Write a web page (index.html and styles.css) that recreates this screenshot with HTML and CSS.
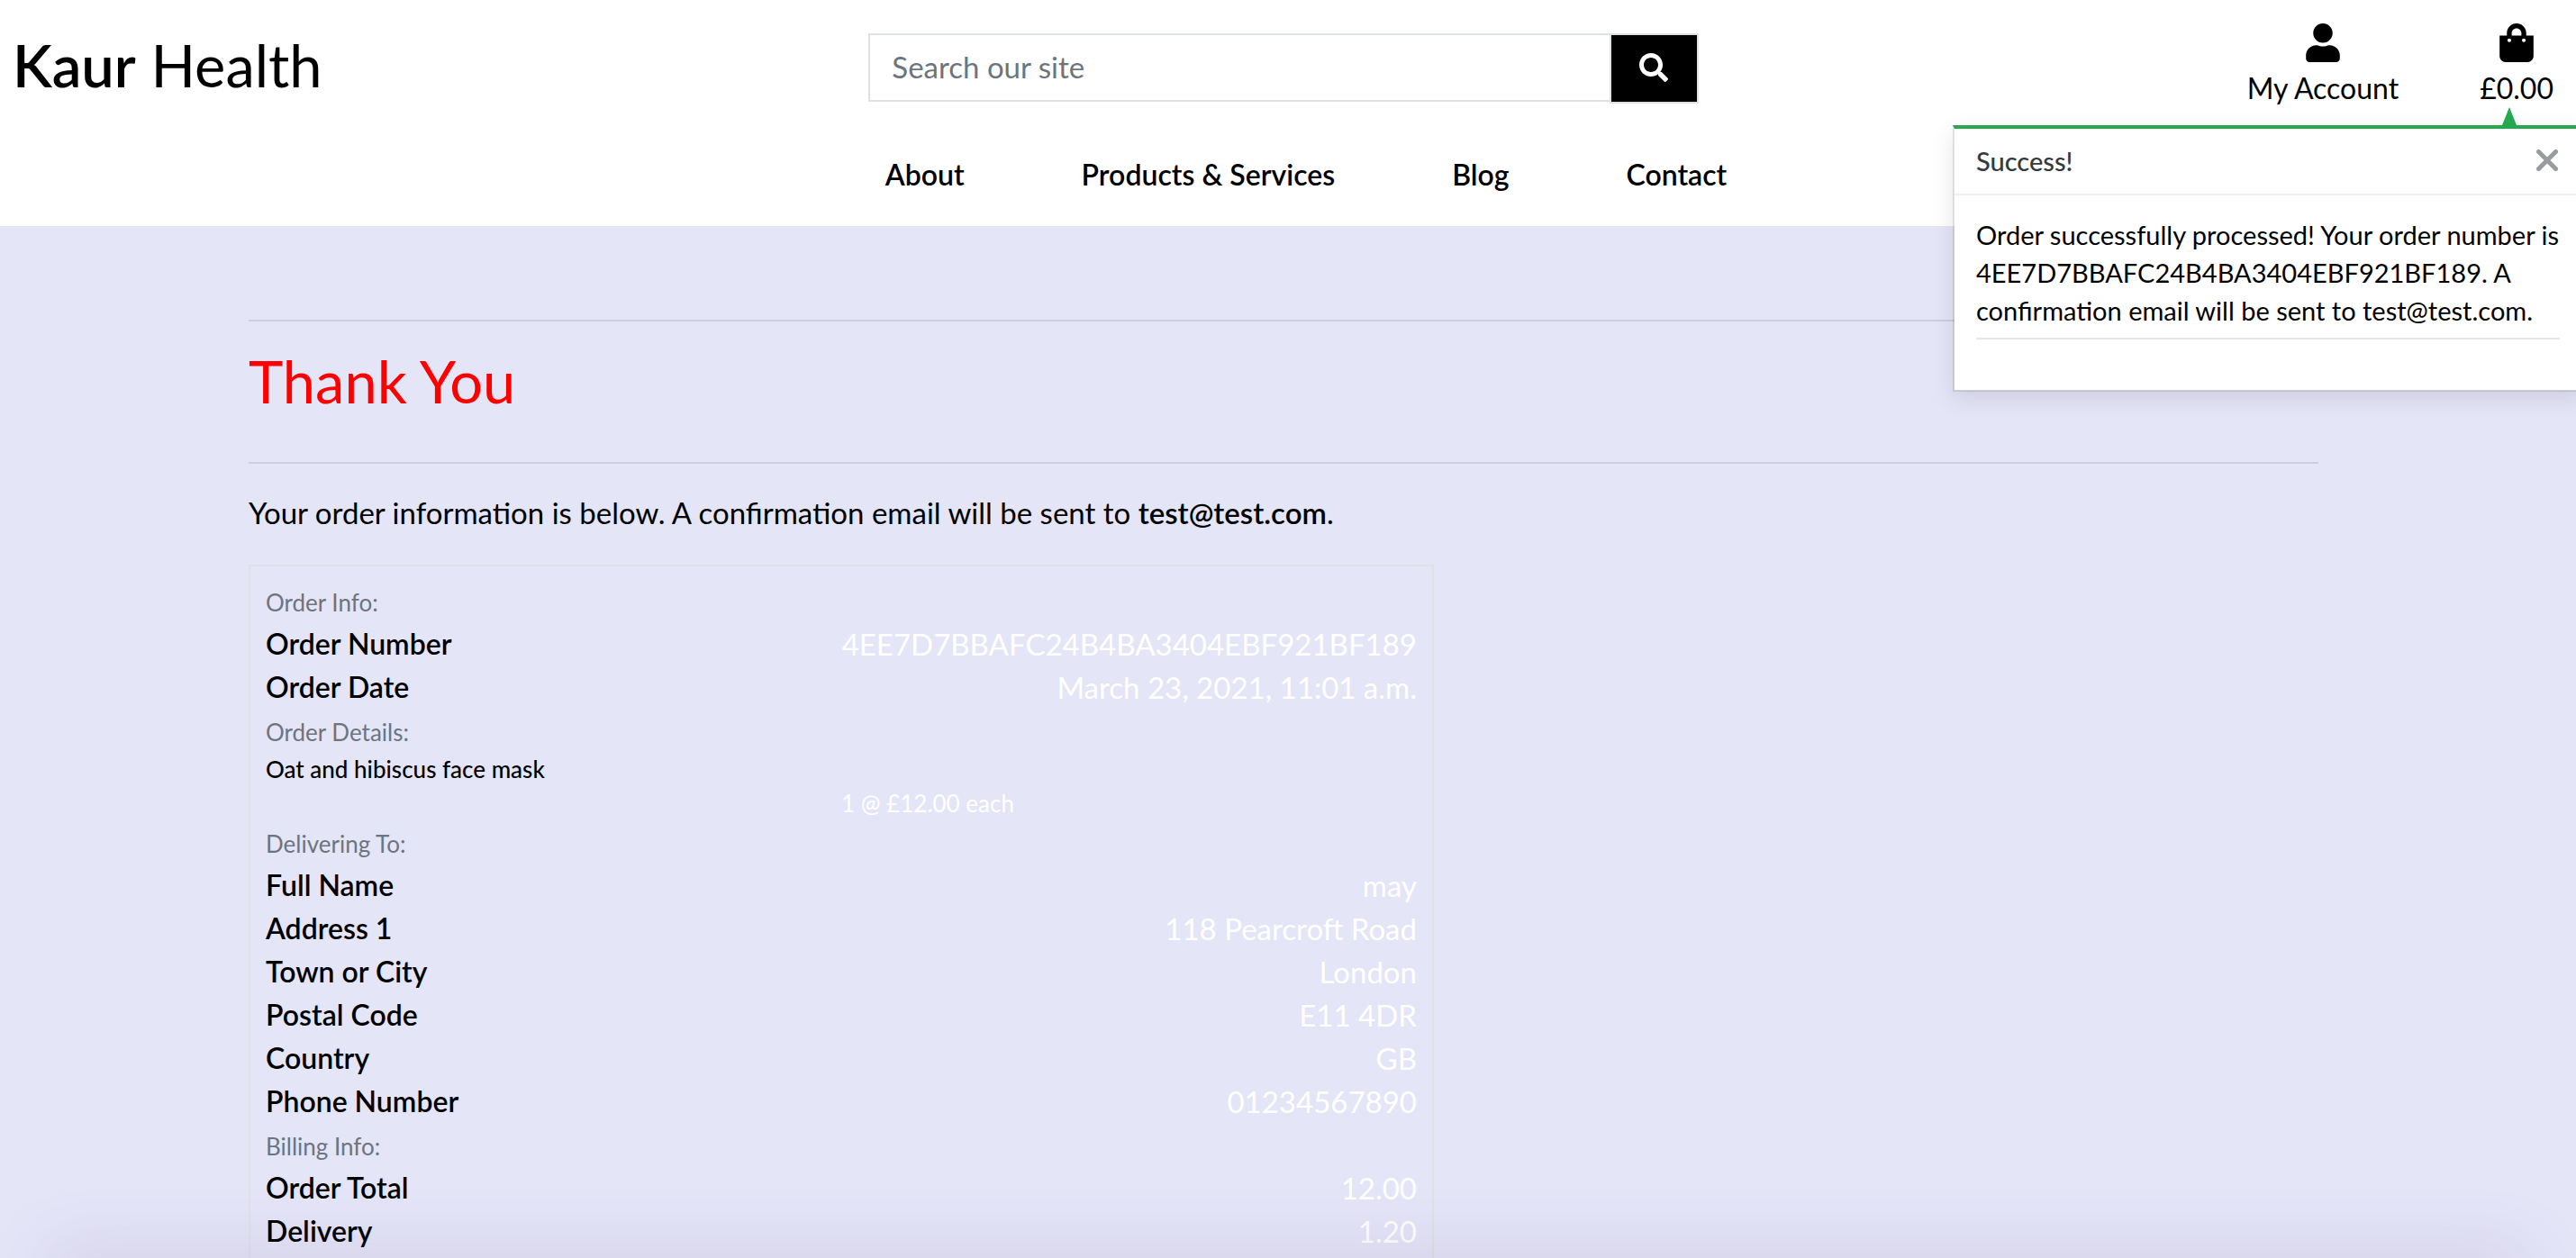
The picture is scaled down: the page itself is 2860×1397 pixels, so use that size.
FILE: index.html
```html
<!DOCTYPE html>
<html lang="en">
<head>
<meta charset="utf-8">
<meta name="viewport" content="width=device-width, initial-scale=1">
<title>Kaur Health</title>
<link rel="stylesheet" href="styles.css">
</head>
<body>
<header class="site-header">
  <div class="top-row">
    <a class="logo" href="#"><span class="strong">Kaur</span> Health</a>
    <form class="search" role="search">
      <input class="search-input" type="text" placeholder="Search our site" aria-label="Search our site">
      <button class="search-button" type="button" aria-label="Search">
        <svg class="search-icon" viewBox="0 0 512 512" aria-hidden="true"><path fill="currentColor" d="M505 442.700L405.300 343c-4.500-4.500-10.600-7-17-7H372c27.600-35.300 44-79.700 44-128C416 93.100 322.900 0 208 0S0 93.100 0 208s93.100 208 208 208c48.300 0 92.700-16.400 128-44v16.300c0 6.400 2.500 12.500 7 17l99.700 99.700c9.400 9.400 24.600 9.400 33.900 0l28.300-28.300c9.400-9.400 9.400-24.600.1-34zM208 336c-70.700 0-128-57.200-128-128 0-70.700 57.200-128 128-128 70.700 0 128 57.200 128 128 0 70.700-57.200 128-128 128z"/></svg>
      </button>
    </form>
    <div class="account">
      <a class="account-link" href="#">
        <svg class="account-icon" viewBox="0 0 448 512" aria-hidden="true"><path fill="currentColor" d="M224 256c70.700 0 128-57.300 128-128S294.700 0 224 0 96 57.300 96 128s57.300 128 128 128zm89.600 32h-16.700c-22.200 10.200-46.900 16-72.900 16s-50.600-5.800-72.900-16h-16.700C60.200 288 0 348.200 0 422.400V464c0 26.500 21.500 48 48 48h352c26.500 0 48-21.500 48-48v-41.600c0-74.200-60.200-134.400-134.400-134.400z"/></svg>
        <span>My Account</span>
      </a>
      <a class="account-link" href="#">
        <svg class="account-icon" viewBox="0 0 448 512" aria-hidden="true"><path fill="currentColor" d="M352 160v-32C352 57.420 294.579 0 224 0 153.420 0 96 57.420 96 128v32H0v272c0 44.183 35.817 80 80 80h288c44.183 0 80-35.817 80-80V160h-96zm-192-32c0-35.290 28.710-64 64-64s64 28.710 64 64v32H160v-32zm160 120c-13.255 0-24-10.745-24-24s10.745-24 24-24 24 10.745 24 24-10.745 24-24 24zm-192 0c-13.255 0-24-10.745-24-24s10.745-24 24-24 24 10.745 24 24-10.745 24-24 24z"/></svg>
        <span>£0.00</span>
      </a>
    </div>
  </div>
  <nav class="main-nav" aria-label="Main">
    <a href="#">About</a>
    <a href="#">Products &amp; Services</a>
    <a href="#">Blog</a>
    <a href="#">Contact</a>
  </nav>
  <div class="toast" role="alert">
    <svg class="toast-arrow" viewBox="0 0 16 20" aria-hidden="true"><path fill="currentColor" d="M8 0L16 20H0z"/></svg>
    <div class="toast-head">
      <span class="toast-title">Success!</span>
      <button class="toast-close" type="button" aria-label="Close">
        <svg viewBox="0 0 24 24" aria-hidden="true"><path d="M2.500 2.500L21.500 21.500M21.500 2.500L2.500 21.500" fill="none" stroke="currentColor" stroke-width="5" stroke-linecap="round"/></svg>
      </button>
    </div>
    <div class="toast-body">
      <p>Order successfully processed! Your order number is 4EE7D7BBAFC24B4BA3404EBF921BF189. A confirmation email will be sent to test@test.com.</p>
      <hr>
    </div>
  </div>
</header>

<main class="content">
  <hr>
  <h1>Thank You</h1>
  <hr>
  <p class="intro">Your order information is below. A confirmation email will be sent to <span class="strong">test@test.com</span>.</p>
  <section class="order">
    <h2>Order Info:</h2>
    <dl>
      <div class="row"><dt>Order Number</dt><dd>4EE7D7BBAFC24B4BA3404EBF921BF189</dd></div>
      <div class="row"><dt>Order Date</dt><dd>March 23, 2021, 11:01 a.m.</dd></div>
    </dl>
    <h2>Order Details:</h2>
    <div class="item">
      <p class="item-name">Oat and hibiscus face mask</p>
      <p class="item-price">1 @ £12.00 each</p>
    </div>
    <h2>Delivering To:</h2>
    <dl>
      <div class="row"><dt>Full Name</dt><dd>may</dd></div>
      <div class="row"><dt>Address 1</dt><dd>118 Pearcroft Road</dd></div>
      <div class="row"><dt>Town or City</dt><dd>London</dd></div>
      <div class="row"><dt>Postal Code</dt><dd>E11 4DR</dd></div>
      <div class="row"><dt>Country</dt><dd>GB</dd></div>
      <div class="row"><dt>Phone Number</dt><dd>01234567890</dd></div>
    </dl>
    <h2>Billing Info:</h2>
    <dl>
      <div class="row"><dt>Order Total</dt><dd>12.00</dd></div>
      <div class="row"><dt>Delivery</dt><dd>1.20</dd></div>
    </dl>
  </section>
</main>
<div class="bottom-shade" aria-hidden="true"></div>
</body>
</html>
```
FILE: styles.css
```css
* {
  box-sizing: border-box;
}

body {
  margin: 0;
  min-height: 100vh;
  display: flex;
  flex-direction: column;
  overflow-x: clip;
  background: #e5e5f8;
  color: #000;
  font-family: Lato, "Open Sans", sans-serif;
  font-size: 33px;
  line-height: 48px;
}

h1, h2, p, dl, dd {
  margin: 0;
  font-weight: 400;
}

a {
  color: inherit;
  text-decoration: none;
}

hr {
  width: 100%;
  margin: 0;
  border: 0;
  border-top: 2px solid rgba(0, 0, 0, 0.1);
}

svg {
  display: block;
}

.main-nav,
.row dt {
  font-size: 32px;
  font-weight: 600;
}

.item-name,
.toast-title {
  font-weight: 500;
}

.strong {
  font-weight: 600;
}

.site-header {
  position: relative;
  background: #fff;
  padding-bottom: 33px;
}

.top-row {
  display: grid;
  grid-template-columns: 1fr 1fr 1fr;
  height: 170px;
  align-items: start;
}

.logo {
  padding: 24px 0 0 14px;
  font-size: 65px;
  line-height: 96px;
}

.search {
  display: flex;
  align-items: flex-start;
  padding: 37px 21px 0 11px;
}

.search-input {
  flex: 1;
  min-width: 0;
  height: 76px;
  padding: 0 24px 2px;
  border: 2px solid #dee2e6;
  border-right: 0;
  border-radius: 0;
  background: #fff;
  color: #000;
  font: inherit;
}

.search-input::placeholder {
  color: #6c757d;
  opacity: 1;
}

.search-button {
  display: flex;
  align-items: center;
  justify-content: center;
  width: 99px;
  height: 78px;
  padding: 0 0 2px;
  border: 2px solid #dee2e6;
  background: #000;
  color: #fff;
}

.search-icon {
  width: 32px;
  height: 32px;
}

.account {
  display: flex;
  justify-content: flex-end;
  gap: 90px;
  padding: 26px 25px 0 0;
}

.account-link {
  display: flex;
  flex-direction: column;
  align-items: center;
  gap: 5px;
  font-size: 32px;
}

.account-icon {
  width: 38px;
  height: 43px;
}

.main-nav {
  display: flex;
  justify-content: center;
  gap: 130px;
  padding-left: 40px;
}

.toast {
  position: absolute;
  top: 139px;
  right: -8px;
  z-index: 2;
  width: 700px;
  border: 2px solid rgba(0, 0, 0, 0.1);
  border-top: 4px solid #25a84e;
  background: #fff;
  background-clip: padding-box;
  box-shadow: 0 8px 24px rgba(0, 0, 0, 0.1);
  font-size: 29px;
  line-height: 42px;
}

.toast-arrow {
  position: absolute;
  top: -24px;
  right: 72px;
  width: 16px;
  height: 20px;
  color: #25a84e;
}

.toast-head {
  display: flex;
  justify-content: space-between;
  align-items: flex-start;
  padding: 15px 24px;
  border-bottom: 2px solid #f2f2f2;
}

.toast-title {
  color: #343a40;
}

.toast-close {
  width: 24px;
  margin: 8px 2px 0 0;
  padding: 0;
  border: 0;
  background: none;
  color: #999c9f;
}

.toast-body {
  padding: 23px 24px 56px;
}

.toast-body hr {
  margin-top: 9px;
}

.content {
  display: flex;
  flex-direction: column;
  flex: 1;
  width: 100%;
  padding: 104px 10% 0 calc(10% - 10px);
}

h1 {
  margin: 28px 0 52px;
  color: #f00;
  font-size: 65px;
  line-height: 76px;
}

.intro {
  margin: 30px 0 34px;
}

.order {
  flex: 1;
  width: 1316px;
  max-width: 100%;
  padding: 14px 17px 0;
  border: 2px solid #dee2e6;
  border-bottom: 0;
}

.order h2 {
  padding-top: 4px;
  color: #6c757d;
  font-size: 26px;
  line-height: 44px;
}

.row {
  display: flex;
  justify-content: space-between;
}

.row dd {
  color: #fff;
}

.item {
  font-size: 26px;
  line-height: 38px;
}

.item-price {
  padding-left: 50%;
  color: #fff;
}

/* Soft shade rising from the lower window edge */
.bottom-shade {
  position: fixed;
  bottom: -40px;
  left: 56px;
  right: 56px;
  height: 40px;
  box-shadow: 0 0 80px rgba(80, 60, 100, 0.2);
  pointer-events: none;
}
```
